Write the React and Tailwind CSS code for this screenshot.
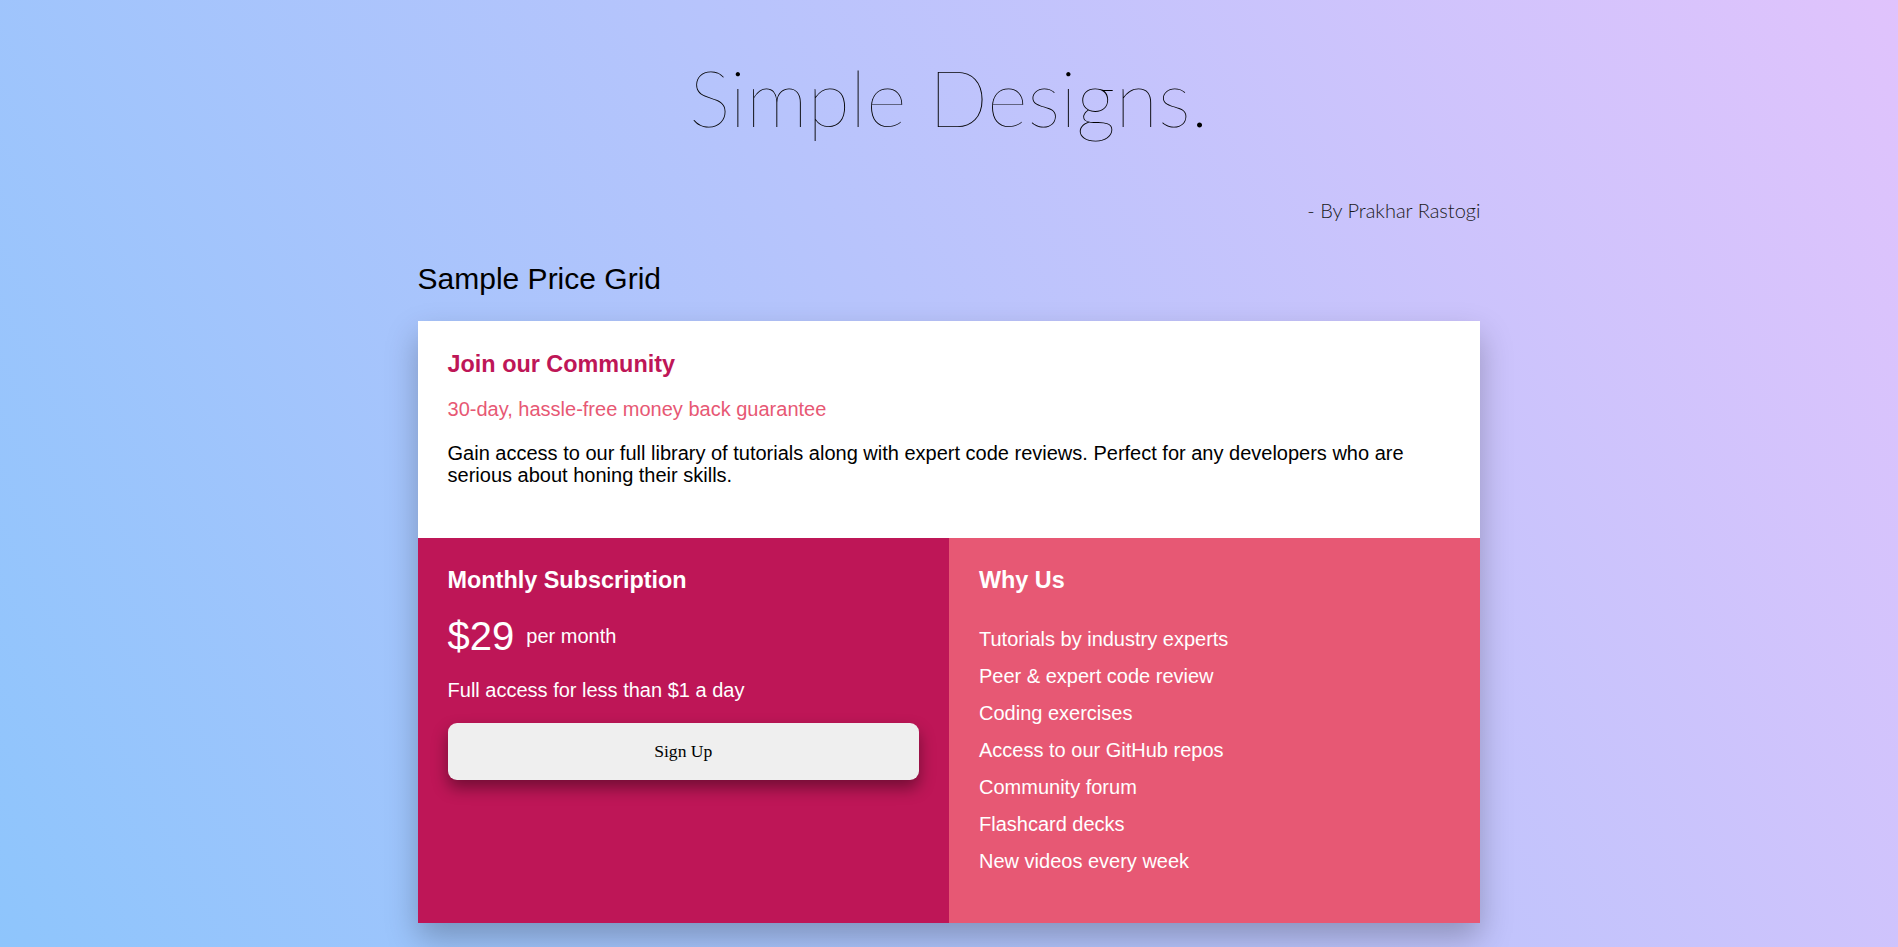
import React from "react";

export default function App() {
  const features = [
    "Tutorials by industry experts",
    "Peer & expert code review",
    "Coding exercises",
    "Access to our GitHub repos",
    "Community forum",
    "Flashcard decks",
    "New videos every week",
  ];
  return (
    <div className="min-h-screen bg-[linear-gradient(62deg,#8EC5FC_0%,#E0C3FC_100%)] pb-[25px] font-['Liberation_Sans',Arial,sans-serif] text-black">
      <h1 className="pt-[51px] text-center font-['Lato',sans-serif] font-thin text-[78px] leading-[93.6px] text-black">
        Simple Designs.
      </h1>
      <div className="mx-auto w-[56%]">
        <p className="mt-[53px] text-right font-['Lato',sans-serif] font-light text-[20px] leading-[24px] text-[#1a1a1a]">
          - By Prakhar Rastogi
        </p>
        <h2 className="mt-[40.8px] text-[30px] leading-[34.5px] font-normal">
          Sample Price Grid
        </h2>
        <div className="mt-[24px] bg-white shadow-[0_15px_30px_rgba(0,0,0,0.25)]">
          <div className="px-[30px] pt-[30px] pb-[51.5px]">
            <h3 className="text-[23.4px] font-bold leading-[27px] text-[#be1657]">
              Join our Community
            </h3>
            <p className="mt-[20.6px] text-[20px] leading-[23px] text-[#e75874]">
              30-day, hassle-free money back guarantee
            </p>
            <p className="mt-[20.3px] text-[20px] leading-[22.4px] text-black">
              Gain access to our full library of tutorials along with expert code reviews. Perfect for any developers who are serious about honing their skills.
            </p>
          </div>
          <div className="flex">
            <div className="w-1/2 bg-[#be1657] px-[30px] pt-[29.4px] text-white">
              <h3 className="text-[23.4px] font-bold leading-[27px]">Monthly Subscription</h3>
              <div className="mt-[18.7px] flex items-center">
                <span className="text-[40px] leading-[46px]">$29</span>
                <span className="ml-[12px] text-[20px] leading-[23px]">per month</span>
              </div>
              <p className="mt-[20px] text-[20px] leading-[23px]">Full access for less than $1 a day</p>
              <button className="mt-[20.7px] h-[57px] w-full rounded-[9px] bg-[#efefef] font-['Liberation_Serif','Times_New_Roman',serif] text-[17.6px] text-black shadow-[0_8px_16px_rgba(0,0,0,0.4)]">
                Sign Up
              </button>
            </div>
            <div className="w-1/2 bg-[#e75874] px-[30px] pt-[29.4px] pb-[50px] text-white">
              <h3 className="text-[23.4px] font-bold leading-[27px]">Why Us</h3>
              <ul className="mt-[34px] flex flex-col gap-[14px]">
                {features.map((f) => (
                  <li key={f} className="text-[20px] leading-[23px]">{f}</li>
                ))}
              </ul>
            </div>
          </div>
        </div>
      </div>
    </div>
  );
}
